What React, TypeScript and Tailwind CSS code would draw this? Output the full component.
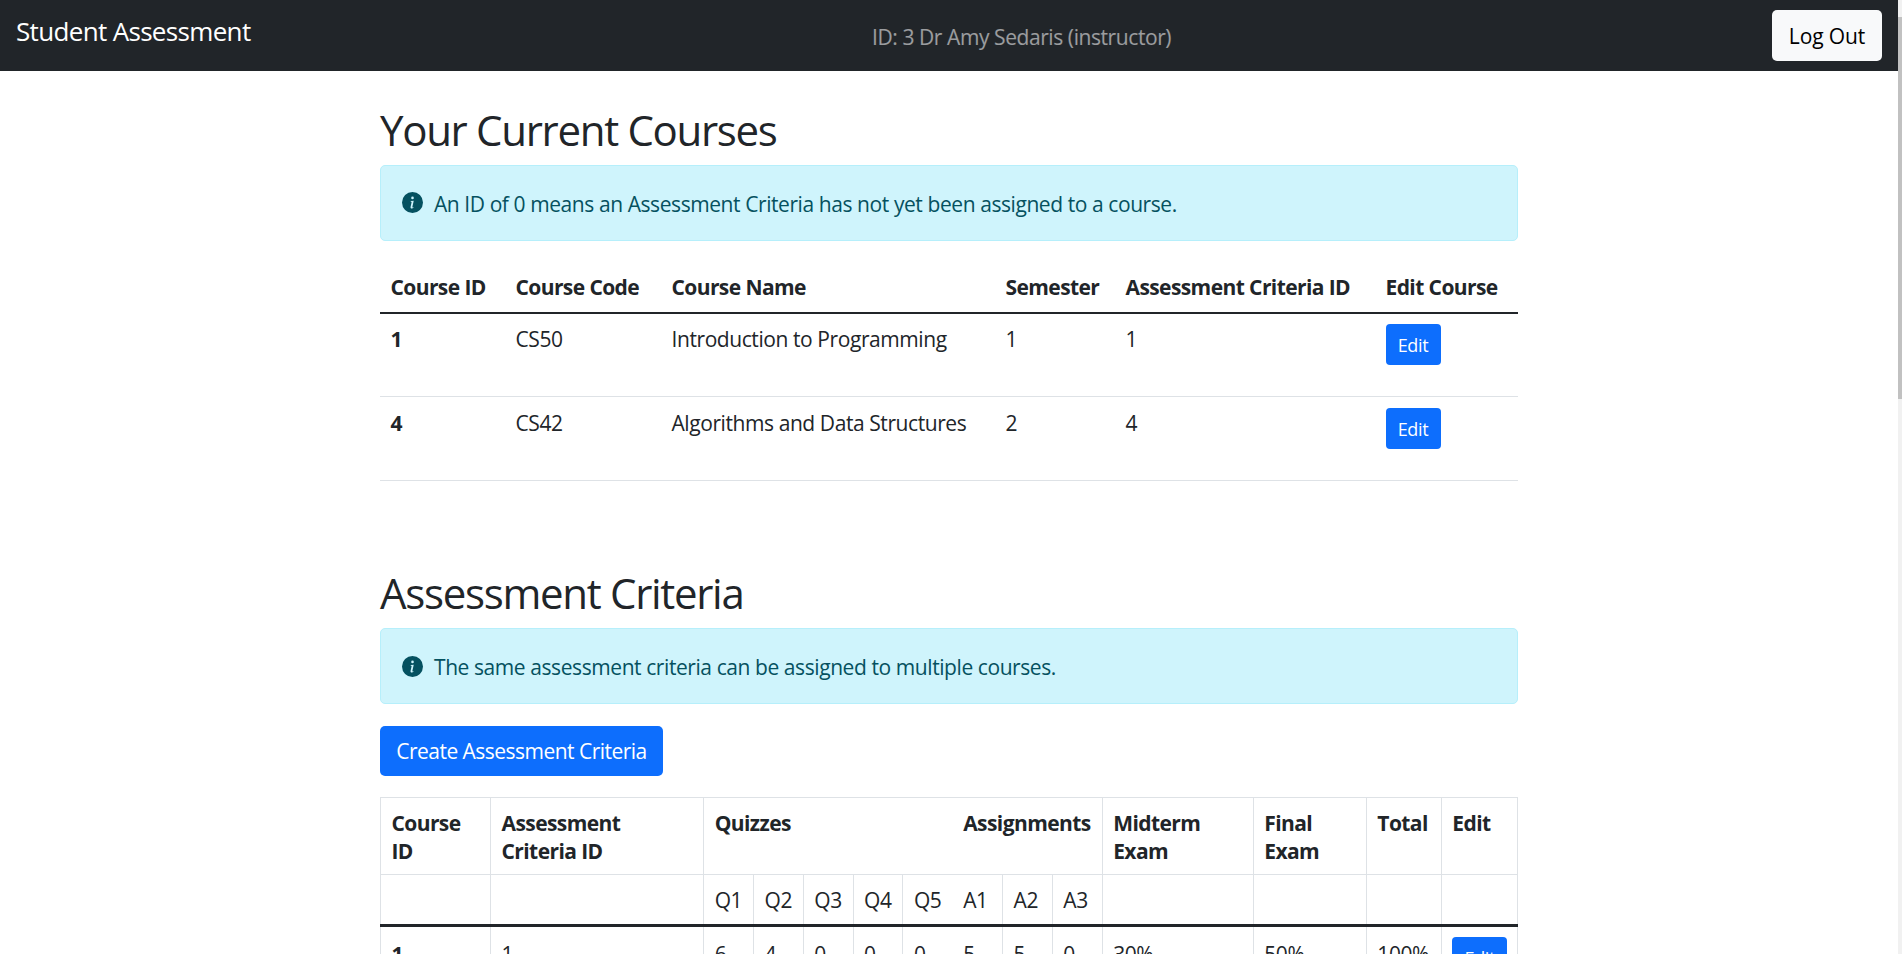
import React from 'react';

const courses = [
  { id: '1', code: 'CS50', name: 'Introduction to Programming', semester: '1', criteria: '1' },
  { id: '4', code: 'CS42', name: 'Algorithms and Data Structures', semester: '2', criteria: '4' },
];

const subHeads = ['Q1', 'Q2', 'Q3', 'Q4', 'Q5', 'A1', 'A2', 'A3'];
const marks = ['6', '4', '0', '0', '0', '5', '5', '0'];

function InfoIcon() {
  return (
    <svg viewBox="0 0 16 16" className="w-[21px] h-[21px] shrink-0 fill-[#055160]">
      <path d="M8 16A8 8 0 1 0 8 0a8 8 0 0 0 0 16zm.93-9.412-1 4.705c-.07.34.029.533.304.533.194 0 .487-.07.686-.246l-.088.416c-.287.346-.92.598-1.465.598-.703 0-1.002-.422-.808-1.319l.738-3.468c.064-.293.006-.399-.287-.47l-.451-.081.082-.381 2.29-.287zM8 5.5a1 1 0 1 1 0-2 1 1 0 0 1 0 2z" />
    </svg>
  );
}

function Alert({ children }: { children: React.ReactNode }) {
  return (
    <div className="h-[76px] flex items-center gap-[11px] pl-[21px] mb-[21px] rounded-[5px] border border-[#b6effb] bg-[#cff4fc] text-[#055160]">
      <InfoIcon />
      <span className="mt-[3px]">{children}</span>
    </div>
  );
}

function EditButton() {
  return (
    <button className="block w-[55px] h-[41px] pt-[1px] rounded-[4px] bg-[#0d6efd] text-white text-[18px] leading-[40px] tracking-[-0.02em]">
      Edit
    </button>
  );
}

function CoursesTable() {
  const th = 'px-[10.5px] pt-[12px] pb-[10px] font-bold tracking-[-0.028em]';
  const td = 'px-[10.5px] pt-[12.5px] pb-[8.5px]';
  return (
    <table className="w-full table-fixed border-collapse mb-[86px]">
      <colgroup>
        <col className="w-[125px]" />
        <col className="w-[156px]" />
        <col className="w-[334px]" />
        <col className="w-[120px]" />
        <col className="w-[260px]" />
        <col className="w-[143px]" />
      </colgroup>
      <thead>
        <tr className="border-b-2 border-[#212529] text-left whitespace-nowrap">
          <th className={th}>Course ID</th>
          <th className={th}>Course Code</th>
          <th className={th}>Course Name</th>
          <th className={th}>Semester</th>
          <th className={th}>Assessment Criteria ID</th>
          <th className={th}>Edit Course</th>
        </tr>
      </thead>
      <tbody>
        {courses.map((c) => (
          <tr key={c.id} className="border-b border-[#dee2e6] align-top h-[84px] whitespace-nowrap">
            <td className={td + ' font-bold'}>{c.id}</td>
            <td className={td}>{c.code}</td>
            <td className={td}>{c.name}</td>
            <td className={td}>{c.semester}</td>
            <td className={td}>{c.criteria}</td>
            <td className="px-[10.5px] py-[10.5px]">
              <EditButton />
            </td>
          </tr>
        ))}
      </tbody>
    </table>
  );
}

function CriteriaTable() {
  const cell = 'border border-[#dee2e6] px-[10.5px] pt-[11.5px] pb-[9.5px] align-top';
  const data = 'border border-[#dee2e6] px-[10.5px] pt-[14px] pb-[7px] align-top';
  const head = 'border border-[#dee2e6] px-[10.5px] pt-[10.5px] pb-[9.6px] align-top leading-[28px] font-bold tracking-[-0.028em]';
  return (
    <table className="w-full table-fixed border-collapse text-left">
      <colgroup>
        <col className="w-[110px]" />
        <col className="w-[213px]" />
        {subHeads.map((s) => (
          <col key={s} className="w-[49.8px]" />
        ))}
        <col className="w-[151px]" />
        <col className="w-[113px]" />
        <col className="w-[75px]" />
        <col className="w-[76px]" />
      </colgroup>
      <thead>
        <tr>
          <th className={head}>Course ID</th>
          <th className={head}>Assessment Criteria ID</th>
          <th colSpan={5} className={head + ' border-r-0'}>Quizzes</th>
          <th colSpan={3} className={head + ' border-l-0'}>Assignments</th>
          <th className={head}>Midterm Exam</th>
          <th className={head}>Final Exam</th>
          <th className={head}>Total</th>
          <th className={head}>Edit</th>
        </tr>
        <tr className="border-b-[3px] border-[#212529]">
          <td className={cell} />
          <td className={cell} />
          {subHeads.map((s, i) => (
            <td
              key={s}
              className={
                cell +
                ' whitespace-nowrap' +
                (i === 4 ? ' border-r-0' : '') +
                (i === 5 ? ' border-l-0' : '')
              }
            >
              {s}
            </td>
          ))}
          <td className={cell} />
          <td className={cell} />
          <td className={cell} />
          <td className={cell} />
        </tr>
      </thead>
      <tbody>
        <tr>
          <td className={data + ' font-bold'}>1</td>
          <td className={data}>1</td>
          {marks.map((m, i) => (
            <td
              key={subHeads[i]}
              className={data + (i === 4 ? ' border-r-0' : '') + (i === 5 ? ' border-l-0' : '')}
            >
              {m}
            </td>
          ))}
          <td className={data}>30%</td>
          <td className={data}>50%</td>
          <td className={data}>100%</td>
          <td className="border border-[#dee2e6] px-[10.5px] py-[10.5px] align-top">
            <EditButton />
          </td>
        </tr>
      </tbody>
    </table>
  );
}

export default function App() {
  return (
    <div className="flex h-[954px] overflow-hidden bg-white text-[#212529] text-[21px] leading-[27.7px] tracking-[-0.02em] font-['Open_Sans',sans-serif]">
      <div className="flex-1 min-w-0">
        <nav className="h-[71px] bg-[#212529] flex items-center pl-[16px] pr-[16px]">
          <span className="w-[856px] shrink-0 text-white text-[26px] leading-[34px] mb-[9px] tracking-[-0.0255em]">
            Student Assessment
          </span>
          <span className="text-white/55 mt-[4px]">ID: 3 Dr Amy Sedaris (instructor)</span>
          <button className="ml-auto w-[110px] h-[51px] pt-[3px] rounded-[5px] bg-[#f8f9fa] text-[#000] tracking-[-0.005em]">
            Log Out
          </button>
        </nav>
        <main className="w-[1138px] mx-auto pt-[33px]">
          <h1 className="text-[42px] leading-[50.4px] pt-[1px] font-normal mb-[9.5px] tracking-[-0.031em]">Your Current Courses</h1>
          <Alert>An ID of 0 means an Assessment Criteria has not yet been assigned to a course.</Alert>
          <CoursesTable />
          <h1 className="text-[42px] leading-[50.4px] pt-[1px] font-normal mb-[9.5px] tracking-[-0.031em]">Assessment Criteria</h1>
          <Alert>The same assessment criteria can be assigned to multiple courses.</Alert>
          <button className="block w-[283px] h-[50px] mt-[22px] pt-[2px] rounded-[5px] bg-[#0d6efd] text-white mb-[21px] tracking-[-0.025em]">
            Create Assessment Criteria
          </button>
          <CriteriaTable />
        </main>
      </div>
      <aside className="w-[4px] shrink-0 bg-[#f1f1f1] pt-[17px]">
        <div className="h-[382px] bg-[#c1c1c1]" />
      </aside>
    </div>
  );
}
